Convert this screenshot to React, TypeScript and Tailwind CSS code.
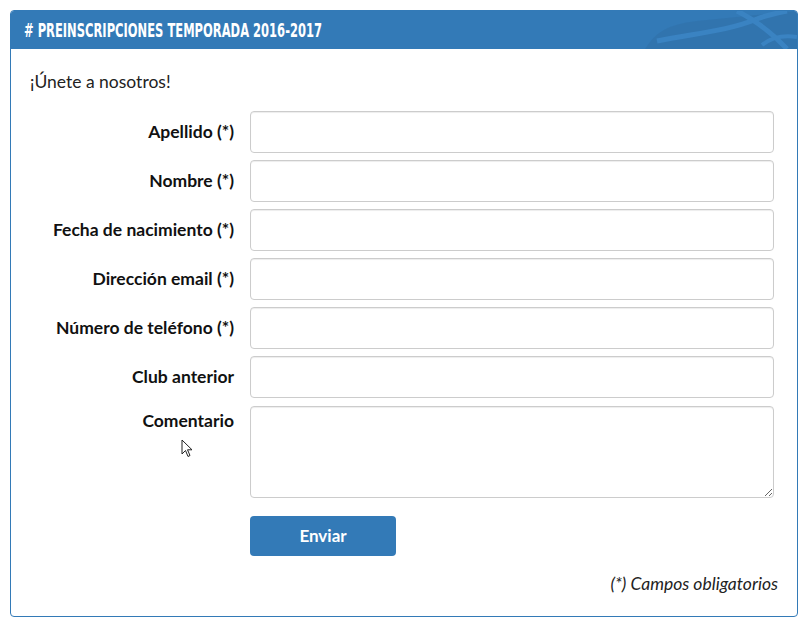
import React from "react";

const fields = [
  { label: "Apellido (*)" },
  { label: "Nombre (*)" },
  { label: "Fecha de nacimiento (*)" },
  { label: "Dirección email (*)" },
  { label: "Número de teléfono (*)" },
  { label: "Club anterior" },
];

const HeaderWaves = () => (
  <svg className="absolute right-0 top-0 h-full w-[160px]" viewBox="0 0 160 38" preserveAspectRatio="none">
    <path d="M8 38 C20 20 30 14 60 10 L160 0 L160 38 Z" fill="#2f6fa8" opacity="0.55" />
    <path d="M20 30 C60 22 90 20 120 8 C130 4 140 2 150 0" stroke="#3a83c2" strokeWidth="5" fill="none" />
    <path d="M100 0 C120 10 135 22 150 38" stroke="#3a83c2" strokeWidth="5" fill="none" />
    <path d="M125 34 C135 26 148 24 160 26" stroke="#3a83c2" strokeWidth="4" fill="none" />
  </svg>
);

const Cursor = () => (
  <svg className="absolute left-[181px] top-[439px]" width="14" height="20" viewBox="0 0 14 20">
    <path d="M1 1 L1 15 L4.5 11.5 L7 17.5 L9 16.5 L6.5 10.8 L11 10.8 Z" fill="#fff" stroke="#222" strokeWidth="1" strokeLinejoin="round" />
  </svg>
);

const App = () => {
  return (
    <main className="relative w-[810px] h-[623px] bg-white pt-[10px] pl-[10px]" style={{ fontFamily: "Lato, 'Open Sans', sans-serif" }}>
      <div className="w-[788px] h-[607px] border border-[#337ab7] rounded-[4px] overflow-hidden">
        <div className="relative h-[38px] bg-[#337ab7] flex items-center pl-[13px]">
          <HeaderWaves />
          <h1
            className="relative inline-block origin-left scale-x-[0.64] whitespace-nowrap text-white text-[20px] font-bold"
            style={{ fontFamily: "'DejaVu Sans Condensed', 'DejaVu Sans', sans-serif" }}
          >
            # PREINSCRIPCIONES TEMPORADA 2016-2017
          </h1>
        </div>
        <div className="px-[19px] pt-[21px]">
          <p className="text-[17.5px] text-[#222] leading-[24px]">¡Únete a nosotros!</p>
          <form className="mt-[17px] flex flex-col gap-[7px]" onSubmit={(e) => e.preventDefault()}>
            {fields.map((f) => (
              <div key={f.label} className="flex items-center">
                <label className="w-[205px] pr-[1px] text-right text-[17.5px] font-bold text-[#111]">{f.label}</label>
                <input
                  type="text"
                  className="ml-[15px] w-[524px] h-[42px] rounded-[4px] border border-[#ccc] bg-white px-3 outline-none shadow-[inset_0_1px_1px_rgba(0,0,0,0.075)]"
                />
              </div>
            ))}
            <div className="flex items-start mt-[1px]">
              <label className="w-[205px] pr-[1px] pt-[2px] text-right text-[17.5px] font-bold text-[#111]">Comentario</label>
              <textarea className="ml-[15px] w-[524px] h-[92px] rounded-[4px] border border-[#ccc] bg-white px-3 outline-none shadow-[inset_0_1px_1px_rgba(0,0,0,0.075)]" />
            </div>
            <div className="flex mt-[11px]">
              <button
                type="submit"
                className="ml-[220px] w-[146px] h-[40px] rounded-[4px] bg-[#337ab7] text-white text-[17px] font-bold"
              >
                Enviar
              </button>
            </div>
          </form>
          <p className="mt-[15px] text-right pr-0 text-[17.5px] italic text-[#222]">(*) Campos obligatorios</p>
        </div>
      </div>
      <Cursor />
    </main>
  );
};

export default App;
